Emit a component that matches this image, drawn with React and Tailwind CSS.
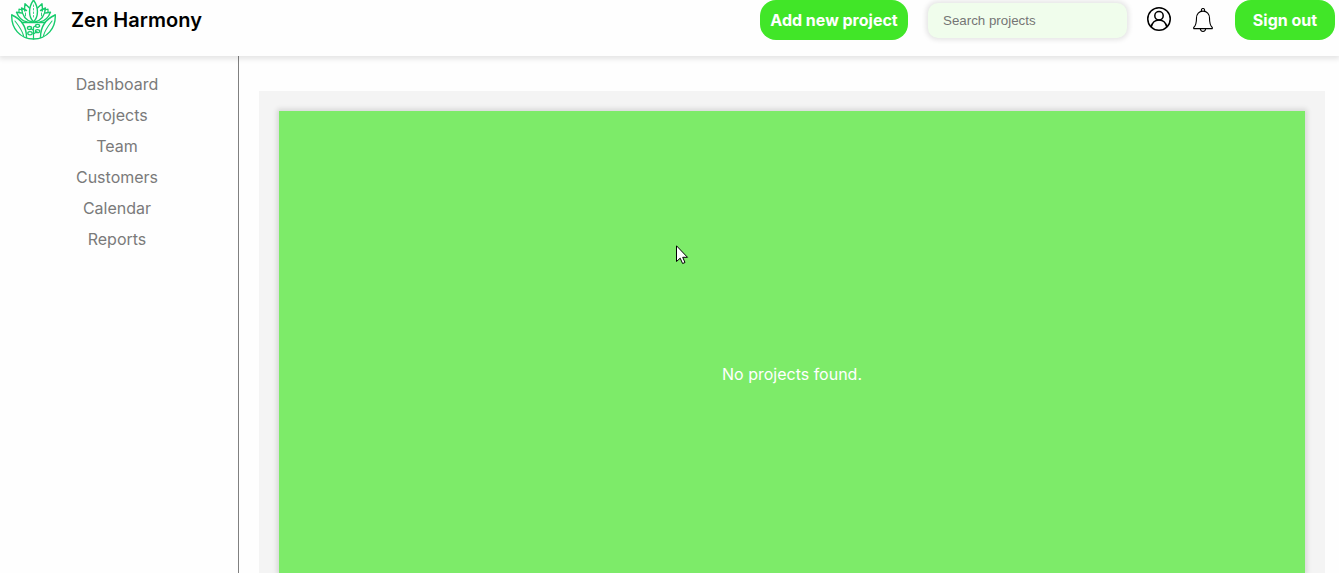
const links = ['Dashboard', 'Projects', 'Team', 'Customers', 'Calendar', 'Reports'];

function Logo() {
  return (
    <svg width="46" height="40" viewBox="0 0 46 40" fill="none" stroke="#16cb6b" strokeWidth="1.4" strokeLinejoin="round" strokeLinecap="round">
      <path d="M22.5 0C17.500 7 17 16 22.500 22C28 16 27.500 7 22.500 0Z" />
      <path d="M22.500 5V18" strokeWidth=".8" strokeDasharray="1.500 2" />
      <path d="M18.500 8L14 3.800C13.500 7 13.500 9 13.800 11M26.500 8L31 3.800C31.500 7 31.500 9 31.200 11" />
      <path d="M15.500 10.500L10.500 8C11 15 14 20 21 22M29.500 10.500L34.500 8C34 15 31 20 24 22" />
      <path d="M10.500 13L5.500 12.300C7.500 17.500 11 21 16 22M34.500 13L39.500 12.300C37.500 17.500 34 21 29 22" />
      <path d="M8 12V9L11 10M37 12V9L34 10" strokeWidth="1.200" />
      <path d="M14.500 13V16M30.500 13V16" strokeWidth=".9" />
      <path d="M.8 15C0 28 9 39 22.500 39C36 39 45 28 44.200 15" />
      <path d="M.8 15C9 18.500 15.500 26 15.500 37.500M44.200 15C36 18.500 29.500 26 29.500 37.500" />
      <path d="M4 21C7 25 10.500 29 12.500 35.500M41 21C38 25 34.500 29 32.500 35.500" strokeWidth="1.100" />
      <path d="M11 22.500H34" />
      <path d="M22.500 39V34M22.500 34L26 31.500M22.500 34V27L25 26M22.500 30.500L20 28.500" strokeWidth="1.200" />
      <g strokeWidth="1.300">
        <ellipse cx="18.500" cy="28" rx="2.100" ry="1.500" />
        <ellipse cx="26.500" cy="25.800" rx="2.100" ry="1.500" />
        <ellipse cx="19" cy="33.200" rx="2.200" ry="1.600" />
        <ellipse cx="26.500" cy="31.200" rx="2.100" ry="1.500" />
      </g>
    </svg>
  );
}

function UserIcon() {
  return (
    <svg width="24" height="24" viewBox="0 0 24 24" fill="none" stroke="#000" strokeWidth="1.5">
      <circle cx="12" cy="12" r="11.250" />
      <circle cx="12" cy="8.800" r="4.200" />
      <path d="M4.200 20C5.200 15.500 8 13 12 13S18.800 15.500 19.800 20" />
    </svg>
  );
}

function BellIcon() {
  return (
    <svg width="20" height="24" viewBox="0 0 20 24" fill="none" stroke="#000" strokeWidth="1.100" strokeLinejoin="round">
      <path d="M8.400 3.600V2.100a1.600 1.600 0 0 1 3.200 0V3.600" />
      <path d="M10 3.100C6 3.100 3.500 6 3.500 10C3.500 15.500 2.500 18 .7 19.500V20.600H19.300V19.500C17.500 18 16.500 15.500 16.500 10C16.500 6 14 3.100 10 3.100Z" />
      <path d="M7.300 20.800C7.600 24.300 12.400 24.300 12.700 20.800" />
    </svg>
  );
}

function PointerIcon() {
  return (
    <svg className="absolute left-[397px] top-[134px]" width="13" height="20" viewBox="0 0 13 20" fill="#fff" stroke="#000" strokeWidth="1">
      <path d="M.5 .8V16.500L4.200 13.200L6.600 18.500L9 17.500L6.700 12.300H11.500Z" />
    </svg>
  );
}

export default function App() {
  return (
    <div className="flex h-[573px] w-full flex-col overflow-hidden bg-[#fefefe] font-['Inter',sans-serif]">
      <header className="z-10 flex h-14 shrink-0 items-start justify-between bg-[#fefefe] pl-[11px] pr-1 shadow-[0_2px_5px_1px_rgba(0,0,0,0.1)]">
        <div className="flex h-10 items-center gap-[14px]">
          <Logo />
          <h1 className="text-xl font-semibold tracking-[0.05px] text-black">Zen Harmony</h1>
        </div>
        <div className="flex h-10 items-center">
          <button className="h-10 w-[148px] whitespace-nowrap rounded-2xl bg-[#41e628] text-base font-bold text-white">Add new project</button>
          <input
            className="ml-5 h-[35px] w-[199px] rounded-[10px] bg-[#f0fdec] px-[15px] font-['Liberation_Sans',sans-serif] text-[13.333px] shadow-[0_0_5px_2px_rgba(0,0,0,0.1)] outline-none placeholder:text-[#757575]"
            placeholder="Search projects"
          />
          <button className="-mt-[2px] ml-5" aria-label="Profile"><UserIcon /></button>
          <button className="ml-[22px]" aria-label="Notifications"><BellIcon /></button>
          <button className="ml-[22px] h-10 w-[100px] whitespace-nowrap rounded-2xl bg-[#41e628] text-base font-bold text-white">Sign out</button>
        </div>
      </header>
      <div className="flex min-h-0 flex-1">
        <nav className="flex w-[239px] shrink-0 flex-col items-center gap-[7px] border-r border-[#808080] pr-1 pt-4 text-base text-[#7a7a7a]">
          {links.map((link) => <a key={link}>{link}</a>)}
        </nav>
        <main className="min-w-0 flex-1 pl-5 pr-[14px] pt-[35px]">
          <div className="h-full bg-[#f4f4f4] px-5 pt-5">
            <section className="relative flex h-full justify-center bg-[#7deb69] pt-[251px] text-base text-white shadow-[0_0_5px_2px_rgba(0,0,0,0.12)]">
              <p>No projects found.</p>
              <PointerIcon />
            </section>
          </div>
        </main>
      </div>
    </div>
  );
}
